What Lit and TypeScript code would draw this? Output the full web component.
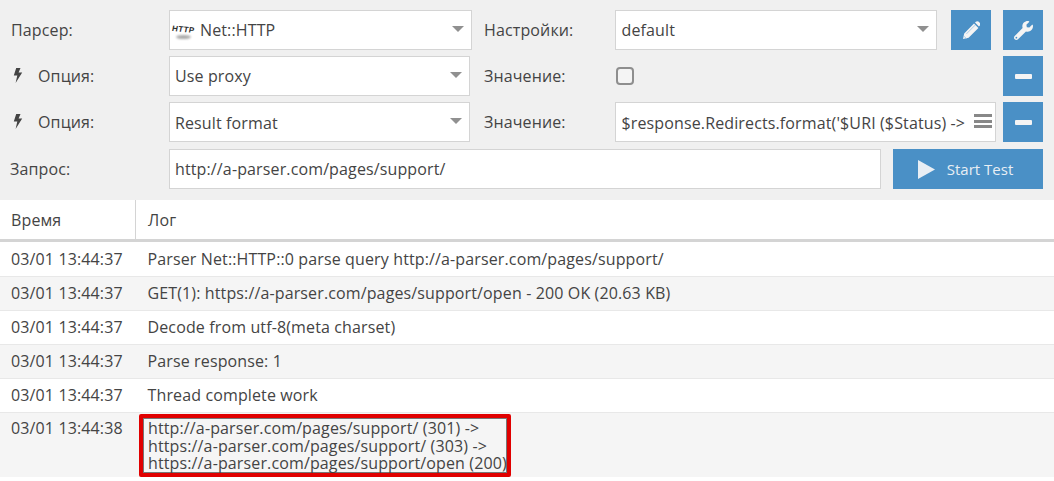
import { LitElement, html, css } from "lit";
import { customElement } from "lit/decorators.js";

const rows: [string, string[]][] = [
  ["03/01 13:44:37", ["Parser Net::HTTP::0 parse query http://a-parser.com/pages/support/"]],
  ["03/01 13:44:37", ["GET(1): https://a-parser.com/pages/support/open - 200 OK (20.63 KB)"]],
  ["03/01 13:44:37", ["Decode from utf-8(meta charset)"]],
  ["03/01 13:44:37", ["Parse response: 1"]],
  ["03/01 13:44:37", ["Thread complete work"]],
];

const bolt = html`<svg class="bolt" viewBox="0 0 10 15" width="10" height="15"><path d="M3.2 0h4.3L5.6 4.6h3.6L2.6 15l1.7-7.6H.8z" fill="#444"/></svg>`;
const minus = html`<button class="btn"><span class="minus"></span></button>`;

@customElement("app-root")
export class AppRoot extends LitElement {
  static styles = css`
    :host { display: block; width: 1054px; height: 481px; overflow: hidden; background: #fff;
      font-family: "Open Sans", sans-serif; font-size: 16px; letter-spacing: 0.13px; color: #444; }
    .panel { background: #f0f0f0; height: 200px; box-sizing: border-box; padding: 10px 11px 0 0;
      display: flex; flex-direction: column; gap: 6px; }
    .row { display: flex; align-items: center; height: 40px; flex: none; }
    .row.last { margin-top: 1px; }
    .lbl { width: 169px; box-sizing: border-box; padding-left: 11px; flex: none; display: flex; align-items: center; }
    .lbl.tight { padding-left: 10px; }
    .lbl .bolt { margin-right: 15px; margin-left: 2px; margin-top: -1px; }
    .lbl2 { width: 131px; flex: none; }
    .field { height: 40px; box-sizing: border-box; background: #fff; border: 1px solid #d4d4d4;
      display: flex; align-items: center; padding: 0 5px; flex: none; position: relative; white-space: nowrap; overflow: hidden; }
    .field.low { padding-top: 2px; }
    .field.inset { padding-left: 5.5px; }
    .caret { position: absolute; right: 7px; top: 15px; width: 0; height: 0; border-left: 6.5px solid transparent; border-right: 6.5px solid transparent; border-top: 6.5px solid #909090; }
    .w303 { width: 303px; } .w301 { width: 301px; } .w322 { width: 322px; } .w381 { width: 381px; } .w712 { width: 712px; }
    .m12 { margin-left: 12px; } .m14 { margin-left: 14px; } .m7 { margin-left: 7px; }
    .auto { margin-left: auto; }
    .btn { width: 40px; height: 40px; flex: none; border: 0; padding: 0; background: #4a90c6; display: flex; align-items: center; justify-content: center; color: #fff; font: inherit; }
    .minus { width: 17px; height: 5px; background: #f4f4f4; border-radius: 1px; display: block; }
    .start { width: 150px; gap: 12px; font-size: 15px; color: #e8eef4; padding-right: 5px; box-sizing: border-box; }
    .check { width: 18px; height: 18px; box-sizing: border-box; border: 2px solid #8e8e8e; border-radius: 4px; background: #f4f4f4; margin-left: 1px; }
    .value { padding-right: 30px; }
    .menu { position: absolute; right: 3px; top: 11px; width: 18px; height: 14px; display: flex; flex-direction: column; justify-content: space-between; background: #fff; }
    .menu i { display: block; height: 3px; background: #888; }
    .http { display: flex; flex-direction: column; align-items: center; width: 21px; margin: 0 6px 0 -2px; height: 20px; }
    .http b { font: italic 900 8px/9px "Liberation Sans", sans-serif; color: #2c2c2c; letter-spacing: 0.4px; margin-top: 5px; transform: skewY(5deg); }
    .http i { display: block; width: 15px; height: 4px; margin-top: 1px; background: #aaa; border-radius: 50%; filter: blur(1px); }
    .thead { display: flex; height: 39px; border-bottom: 3px solid #d4d4d4; }
    .tr { display: flex; height: 33px; border-bottom: 1px solid #e8e8e8; }
    .tr:first-child { height: 34px; }
    .tr:nth-child(even) { background: #f5f5f5; }
    .c1 { width: 135px; flex: none; padding: 6px 0 0 11px; box-sizing: border-box; line-height: 20px; }
    .c2 { padding: 6px 0 0 12.5px; line-height: 20px; }
    .tr:first-child .c1, .tr:first-child .c2 { padding-top: 7px; }
    .thead .c1 { border-right: 1px solid #d4d4d4; width: 136px; padding-top: 10px; }
    .thead .c2 { padding-top: 10px; padding-left: 12px; }
    .tr.multi { height: 64px; position: relative; border-bottom: 0; }
    .tr.multi .c1 { padding-top: 5px; }
    .box { position: absolute; left: 139px; top: 1px; width: 372px; height: 63px; box-sizing: border-box; border: 4px solid #e00000; border-radius: 2px; box-shadow: inset 0 0 0 1px #777; padding: 2px 0 0 5px; line-height: 17.5px; white-space: nowrap; }
  `;

  render() {
    return html`
      <div class="panel">
        <div class="row">
          <div class="lbl">Парсер:</div>
          <div class="field w303">
            <span class="http"><b>HTTP</b><i></i></span>Net::HTTP<span class="caret"></span>
          </div>
          <div class="lbl2 m12">Настройки:</div>
          <div class="field w322 inset">default<span class="caret"></span></div>
          <button class="btn m14">
            <svg viewBox="0 0 17 18" width="17" height="18">
              <path fill="#f4f4f4" d="M0 18l1.2-5.6L11 2.6l4.4 4.4-9.8 9.8zM12 1.6l.8-.8c.9-.9 2.2-.9 3 0l.9.9c.9.9.9 2.1 0 3l-.8.8z"/>
              <path d="M3.4 12.9l8.8-8.8M1 15.2l2.3 2.3" stroke="#a9cbe6" stroke-width="1" fill="none"/>
            </svg>
          </button>
          <button class="btn m12">
            <svg viewBox="0 0 512 512" width="19" height="19"><path fill="#f4f4f4" d="M507.73 109.1c-2.24-9.03-13.54-12.09-20.12-5.51l-74.36 74.36-67.88-11.31-11.31-67.88 74.36-74.36c6.62-6.62 3.43-17.9-5.66-20.16-47.38-11.74-99.55.91-136.58 37.93-39.64 39.64-50.55 97.1-34.05 147.2L18.74 402.76c-24.99 24.99-24.99 65.51 0 90.5 24.99 24.99 65.51 24.99 90.5 0l213.21-213.21c50.12 16.71 107.47 5.68 147.37-34.22 37.07-37.07 49.7-89.32 37.91-136.73zM64 472c-13.25 0-24-10.75-24-24 0-13.26 10.75-24 24-24s24 10.74 24 24c0 13.25-10.75 24-24 24z"/></svg>
          </button>
        </div>
        <div class="row">
          <div class="lbl">${bolt}Опция:</div>
          <div class="field w301">Use proxy<span class="caret"></span></div>
          <div class="lbl2 m14">Значение:</div>
          <div class="check"></div>
          <div class="auto">${minus}</div>
        </div>
        <div class="row">
          <div class="lbl">${bolt}Опция:</div>
          <div class="field w301 low">Result format<span class="caret"></span></div>
          <div class="lbl2 m14">Значение:</div>
          <div class="field w381 value low inset">$response.Redirects.format('$URI ($Status) -&gt;<span class="menu"><i></i><i></i><i></i></span></div>
          <div class="m7">${minus}</div>
        </div>
        <div class="row last">
          <div class="lbl tight">Запрос:</div>
          <div class="field w712">http://a-parser.com/pages/support/</div>
          <button class="btn start m12">
            <svg viewBox="0 0 17 19" width="17" height="19"><path d="M0 0l17 9.5L0 19z" fill="#e8eef4"/></svg>Start Test
          </button>
        </div>
      </div>
      <div class="thead"><div class="c1">Время</div><div class="c2">Лог</div></div>
      <div class="tbody">
        ${rows.map(([t, m]) => html`<div class="tr"><div class="c1">${t}</div><div class="c2">${m[0]}</div></div>`)}
        <div class="tr multi">
          <div class="c1">03/01 13:44:38</div>
          <div class="box">http://a-parser.com/pages/support/ (301) -&gt;<br />https://a-parser.com/pages/support/ (303) -&gt;<br />https://a-parser.com/pages/support/open (200)</div>
        </div>
      </div>
    `;
  }
}
